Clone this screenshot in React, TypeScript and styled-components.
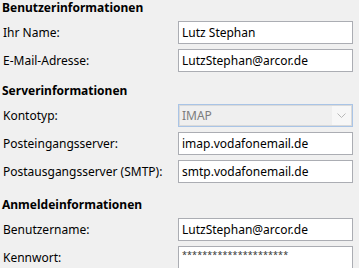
import React from "react";
import styled, { createGlobalStyle } from "styled-components";

const Global = createGlobalStyle`
  html, body {
    margin: 0;
    padding: 0;
    background: #f0f0f0;
  }
  body {
    font-family: "Noto Sans", "Open Sans", sans-serif;
    font-size: 12px;
    color: #000;
  }
`;

const Page = styled.div`
  width: 359px;
  height: 268px;
  overflow: hidden;
  padding: 0 0 0 3px;
  box-sizing: border-box;
`;

const Section = styled.section<{ $top: number }>`
  margin-top: ${(p) => p.$top}px;
`;

const Heading = styled.div`
  font-weight: 700;
  height: 16px;
  line-height: 16px;
  margin-bottom: 5px;
  margin-left: -1px;
`;

const Rows = styled.div`
  display: grid;
  grid-template-columns: 175px 175px;
  row-gap: 5px;
`;

const Label = styled.label`
  height: 23px;
  line-height: 23px;
  white-space: nowrap;
`;

const Field = styled.div<{ $disabled?: boolean }>`
  height: 23px;
  box-sizing: border-box;
  border: 1px solid ${(p) => (p.$disabled ? "#a9c4e6" : "#abadb3")};
  background: ${(p) => (p.$disabled ? "#efefef" : "#fff")};
  box-shadow: ${(p) => (p.$disabled ? "inset 0 0 0 1px #dadada" : "none")};
  color: ${(p) => (p.$disabled ? "#7d7d7d" : "#000")};
  padding: 0 3px;
  line-height: 21px;
  display: flex;
  align-items: center;
  justify-content: space-between;
  white-space: nowrap;
  overflow: hidden;
`;

const Arrow = styled.span`
  width: 19px;
  height: 19px;
  margin-right: -2px;
  background: #f7f7f7;
  display: flex;
  align-items: center;
  justify-content: center;
`;

const Stars = styled.span`
  font-size: 9px;
  letter-spacing: 0.1px;
  margin-top: -6px;
  color: #333;
`;

type Row = { label: string; value: string; kind?: "select" | "password" };

const sections: { title: string; top: number; rows: Row[] }[] = [
  {
    title: "Benutzerinformationen",
    top: 0,
    rows: [
      { label: "Ihr Name:", value: "Lutz Stephan" },
      { label: "E-Mail-Adresse:", value: "LutzStephan@arcor.de" },
    ],
  },
  {
    title: "Serverinformationen",
    top: 11,
    rows: [
      { label: "Kontotyp:", value: "IMAP", kind: "select" },
      { label: "Posteingangsserver:", value: "imap.vodafonemail.de" },
      { label: "Postausgangsserver (SMTP):", value: "smtp.vodafonemail.de" },
    ],
  },
  {
    title: "Anmeldeinformationen",
    top: 14,
    rows: [
      { label: "Benutzername:", value: "LutzStephan@arcor.de" },
      { label: "Kennwort:", value: "*********************", kind: "password" },
    ],
  },
];

export default function App() {
  return (
    <>
      <Global />
      <Page>
        {sections.map((s) => (
          <Section key={s.title} $top={s.top}>
            <Heading>{s.title}</Heading>
            <Rows>
              {s.rows.map((r) => (
                <React.Fragment key={r.label}>
                  <Label>{r.label}</Label>
                  {r.kind === "select" ? (
                    <Field $disabled>
                      <span>{r.value}</span>
                      <Arrow>
                        <svg width="9" height="5" viewBox="0 0 9 5">
                          <path d="M0.5 0.5 L4.5 4.5 L8.5 0.5" fill="none" stroke="#b8b8b8" strokeWidth="1" />
                        </svg>
                      </Arrow>
                    </Field>
                  ) : r.kind === "password" ? (
                    <Field>
                      <Stars>{r.value}</Stars>
                    </Field>
                  ) : (
                    <Field>{r.value}</Field>
                  )}
                </React.Fragment>
              ))}
            </Rows>
          </Section>
        ))}
      </Page>
    </>
  );
}
